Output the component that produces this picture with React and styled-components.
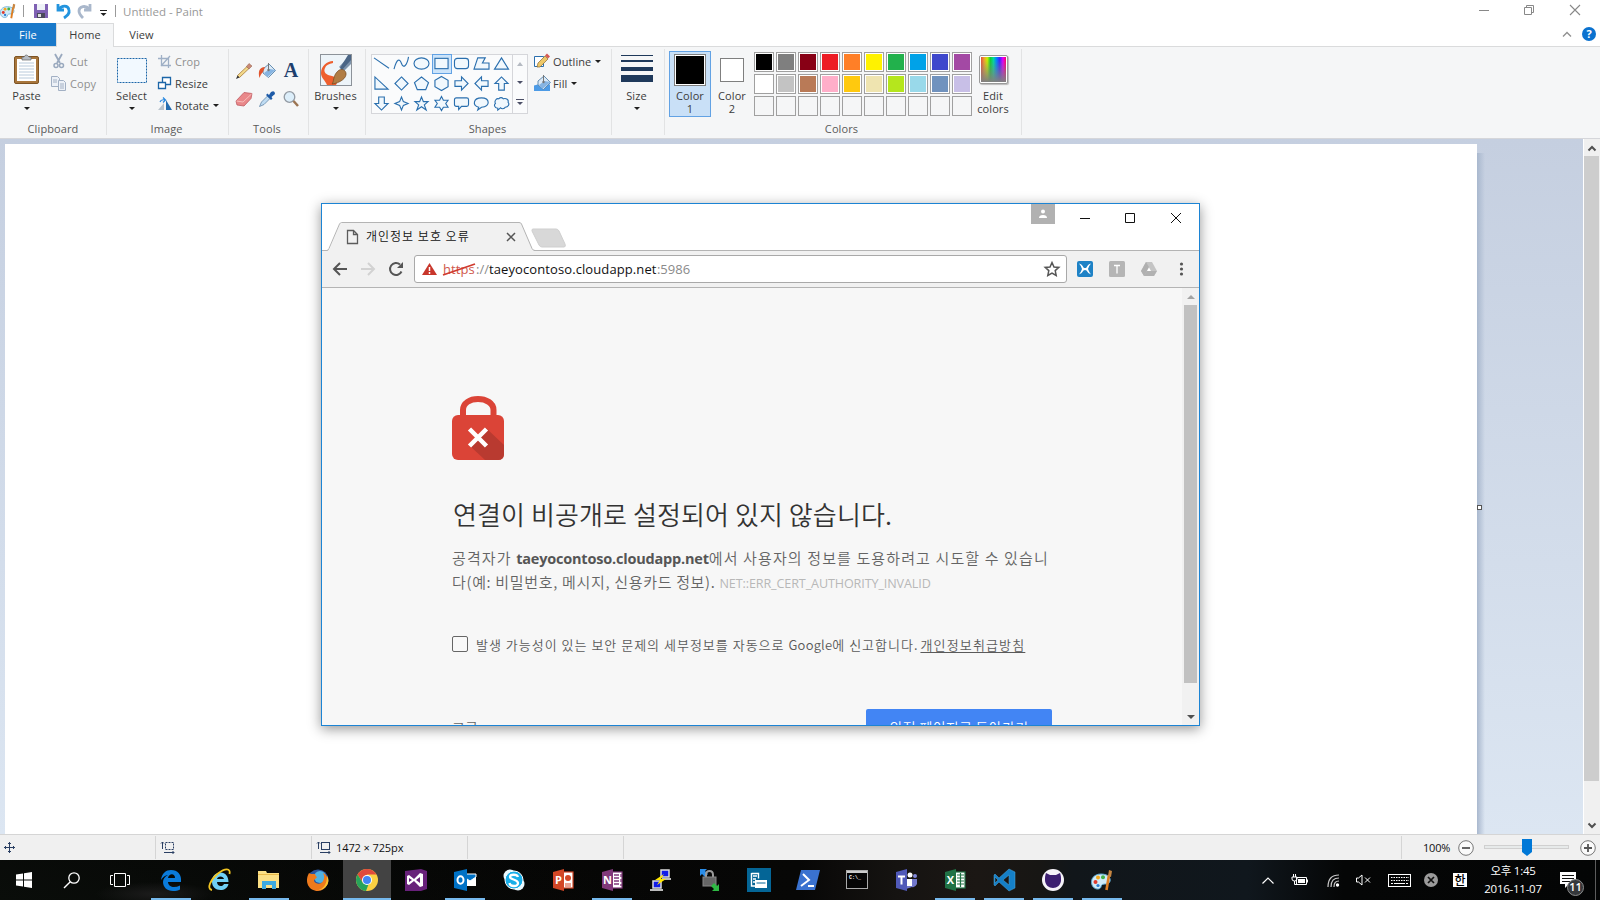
import React from 'react';
import styled, { createGlobalStyle } from 'styled-components';

const UI = '"Open Sans", "Noto Sans CJK KR", sans-serif';

const Global = createGlobalStyle`
  * { box-sizing: border-box; }
  html, body { margin: 0; padding: 0; width: 1600px; height: 900px; overflow: hidden; }
  body { font-family: ${UI}; font-size: 11px; color: #3c3c3c; background: #fff; }
  svg { display: block; flex: none; overflow: visible; }
`;

const Desktop = styled.div`
  width: 1600px; height: 900px; display: flex; flex-direction: column; overflow: hidden;
`;
const Spacer = styled.div`flex: 1;`;
const Text = styled.span`
  white-space: nowrap;
  font-size: ${p => p.$size || 11}px;
  letter-spacing: ${p => p.$ls || 0}px;
  color: ${p => p.$c || '#3c3c3c'};
  line-height: ${p => p.$lh || 14}px;
`;

/* ---------- title bar ---------- */
const TitleBar = styled.div`
  height: 23px; flex: none; display: flex; align-items: center; background: #fff;
`;
const QuickAccess = styled.div`
  display: flex; align-items: center; width: 123px; height: 23px; padding-bottom: 1px;
`;
const Caption = styled.div`
  display: flex; align-items: flex-start; gap: 35px; padding: 5px 20px 0 0; height: 23px;
`;
const TabStrip = styled.div`
  height: 24px; flex: none; display: flex; align-items: stretch; border-bottom: 1px solid #dadbdc;
`;
const RibbonTab = styled.div`
  height: ${p => (p.$active ? 24 : 23)}px;
  width: ${p => p.$w}px; display: flex; align-items: center; justify-content: center;
  font-size: 11px; letter-spacing: .1px; padding-bottom: ${p => (p.$active ? 3 : 1)}px;
  color: ${p => (p.$file ? '#fff' : '#3c3c3c')};
  background: ${p => (p.$file ? '#1979ca' : p.$active ? '#f5f6f7' : '#fff')};
  border: solid #dadbdc; border-width: ${p => (p.$active ? '1px 1px 0 1px' : '0')};
`;
const TabTools = styled.div`
  display: flex; align-items: center; gap: 11px; padding: 0 4px 1px 0;
`;

/* ---------- ribbon ---------- */
const Ribbon = styled.div`
  height: 92px; flex: none; display: flex; padding-top: 2px; background: #f5f6f7;
  border-bottom: 1px solid #d5d6da;
`;
const Group = styled.div`
  width: ${p => p.$w}px; height: 86px; display: flex; flex-direction: column; flex: none;
  border-right: 1px solid #e2e3e4;
`;
const GroupBody = styled.div`
  height: 73px; display: flex; align-items: flex-start; padding-left: ${p => p.$pl || 0}px;
`;
const GroupLabel = styled.div`
  text-align: center; line-height: 13px; font-size: 11px; letter-spacing: .1px; color: #5a5a5a;
  white-space: nowrap; padding-right: ${p => p.$pr || 0}px;
`;
const BigButton = styled.div`
  width: ${p => p.$w}px; height: 68px; display: flex; flex-direction: column; align-items: center;
  text-align: center; line-height: 13px; letter-spacing: .1px; white-space: nowrap; flex: none;
`;
const IconSlot = styled.div`
  height: 40px; padding-top: ${p => p.$pt || 5}px; flex: none;
`;
const SmallList = styled.div`
  display: flex; flex-direction: column; padding-top: 1px;
  margin-left: ${p => p.$ml || 0}px;
`;
const SmallButton = styled.div`
  height: 22px; display: flex; align-items: center; white-space: nowrap; letter-spacing: .1px;
  color: ${p => (p.$off ? '#8f8f8f' : '#3c3c3c')};
`;
const SmallIcon = styled.div`width: ${p => p.$w || 19}px; display: flex;`;
const Caret = styled.i`
  width: 0; height: 0; border: 3px solid transparent; border-bottom: 0;
  border-top-color: ${p => p.$c || '#1f1f1f'};
  margin: ${p => p.$m || 0};
`;
const ToolGrid = styled.div`
  display: grid; grid-template-columns: repeat(3, 23.5px); grid-auto-rows: 28px; padding-top: 8px;
  justify-items: center; align-items: center;
`;
const Gallery = styled.div`
  margin-top: 5px; width: 157px; height: 60px; display: flex; border: 1px solid #d5d6da; background: #fafbfc;
`;
const ShapeGrid = styled.div`
  display: grid; grid-template-columns: repeat(7, 20px); grid-auto-rows: 19.7px; width: 140.5px;
  margin: -1px 0 0 -.5px;
`;
const ShapeCell = styled.div`
  display: flex; align-items: center; justify-content: center;
  background: ${p => (p.$on ? '#cce4fa' : 'transparent')};
  outline: ${p => (p.$on ? '1px solid #62a2e4' : 'none')}; outline-offset: -1px;
`;
const GalleryScroll = styled.div`
  flex: 1; border-left: 1px solid #d5d6da; display: flex; flex-direction: column;
  align-items: center; justify-content: space-around;
`;
const ColorButton = styled(BigButton)`
  margin-top: 2px; height: 66px;
  background: ${p => (p.$on ? '#c9e0f7' : 'transparent')};
  border: 1px solid ${p => (p.$on ? '#62a2e4' : 'transparent')};
`;
const ColorSlot = styled.div`height: 37px; display: flex; align-items: center;`;
const ColorSquare = styled.div`
  width: ${p => p.$s}px; height: ${p => p.$s}px; border: 1px solid #7f7f7f; padding: 1px;
  background: ${p => p.$c}; background-clip: content-box; box-shadow: inset 0 0 0 1px #fff;
  margin-bottom: 2px;
`;
const Palette = styled.div`
  display: grid; grid-template-columns: repeat(10, 20px); grid-auto-rows: 20px; gap: 2px;
  padding-top: 3px; margin-left: 1px; flex: none;
`;
const Swatch = styled.div`
  border: 1px solid #a0a0a0; padding: 1px; background-color: ${p => p.$c || '#f5f6f7'};
  background-clip: content-box; box-shadow: inset 0 0 0 1px ${p => (p.$c ? '#fff' : '#f5f6f7')};
`;
const Spectrum = styled.div`
  width: 29px; height: 29px; border: 1px solid #999; border-radius: 2px; padding: 1px;
  box-shadow: 1px 1px 1px #bbb; background: #fff;
  &::before { content: ''; display: block; width: 25px; height: 25px;
    background: linear-gradient(to bottom, transparent 10%, #808080),
      linear-gradient(to right, #e0503c, #f0a030, #c8f000, #10d030, #00d8a0, #0080ff, #4020ff, #e000ff, #ff0060); }
`;

/* ---------- work area ---------- */
const Work = styled.div`
  height: 695px; flex: none; display: flex;
`;
const Backdrop = styled.div`
  flex: 1; display: flex; padding: 5px 0 0 5px; overflow: hidden;
  background: linear-gradient(#c5cfe0, #dce6f2);
`;
const Paper = styled.div`
  position: relative; width: 1472px; height: 690px; background: #fff;
`;
const PaperShade = styled.div`
  width: 8px; margin-top: 9px; background: linear-gradient(to right, #a9b8ce, rgba(190,203,222,0));
`;
const Handle = styled.div`
  position: absolute; left: 1472px; top: 361px; width: 5px; height: 5px; background: #fff; border: 1px solid #555;
`;
const ScrollTrack = styled.div`
  width: 17px; background: #f0f0f0; border-left: 1px solid #fff; padding: 0 1px 0 0;
  display: flex; flex-direction: column; align-items: center;
`;
const ScrollThumb = styled.div`width: 15px; height: 625px; background: #cdcdcd;`;
const ArrowBox = styled.div`height: 17px; display: flex; align-items: center; justify-content: center;`;

/* ---------- browser window ---------- */
const Browser = styled.div`
  position: absolute; left: 316px; top: 59px; width: 879px; height: 523px;
  border: 1px solid #1c84d4; background: #fff; display: flex; flex-direction: column;
  box-shadow: 0 3px 12px rgba(0,0,0,.42); overflow: hidden;
`;
const BrowserTop = styled.div`
  height: 46px; flex: none; display: flex;
`;
const TabArea = styled.div`
  width: 250px; height: 47px; position: relative; padding-top: 18px;
`;
const TabShape = styled.svg`position: absolute; left: 0; top: 0;`;
const TabContent = styled.div`
  position: relative; display: flex; align-items: center; height: 29px; padding: 0 57px 0 26px;
`;
const TabTitle = styled.span`
  font: 350 12px/20px "Noto Sans CJK KR", sans-serif; color: #111; letter-spacing: 1px; margin: -2px 0 0 8px; white-space: nowrap;
`;
const BrowserCaption = styled.div`
  display: flex; align-items: flex-start; width: 168px; height: 46px;
`;
const Avatar = styled.div`
  width: 24px; height: 20px; background: #b1b1b1; display: flex; align-items: center; justify-content: center;
`;
const NavBar = styled.div`
  height: 38px; flex: none; display: flex; align-items: center; background: #f1f1f1;
  border-top: 1px solid #b4b4b4; border-bottom: 1px solid #b4b4b4; padding-left: 10px;
`;
const NavIcons = styled.div`display: flex; gap: 12px; width: 82px;`;
const Omnibox = styled.div`
  width: 653px; height: 28px; border: 1px solid #a9a9a9; border-radius: 3px; background: #fff;
  display: flex; align-items: center; padding: 0 6px 1px 7px;
`;
const Url = styled.div`
  display: flex; margin-left: 6px; font-family: "Open Sans", sans-serif; font-size: 13px; line-height: 20px; color: #8a8a8a;
`;
const Scheme = styled.span`position: relative; color: #d0584c; width: 33px; letter-spacing: .1px;`;
const Strike = styled.svg`position: absolute; left: 0; top: 3px;`;
const Host = styled.span`color: #111; width: 168px; letter-spacing: ${p => p.$ls}px;`;
const Extensions = styled.div`
  display: flex; align-items: center; gap: 16px; margin-left: 10px;
`;
const PageRow = styled.div`flex: 1; min-height: 0; display: flex; background: #f7f7f7;`;
const Page = styled.div`
  width: 860px; padding: 108px 0 0 130px; overflow: hidden; color: #646464;
`;
const Heading = styled.h1`
  margin: 35px 0 0 1px; font: 350 26px/38px "Noto Sans CJK KR", sans-serif;
  letter-spacing: .1px; color: #333; white-space: nowrap;
`;
const Para = styled.div`
  margin-top: 13px; font: 350 15px/24px "Noto Sans CJK KR", sans-serif; color: #646464;
`;
const Line = styled.div`white-space: nowrap; height: 24px; letter-spacing: ${p => p.$ls}px;`;
const Domain = styled.b`font: 700 14.5px "Open Sans", sans-serif; color: #555; letter-spacing: ${p => p.$ls}px;`;
const ErrCode = styled.span`font: 400 12.6px "Open Sans", sans-serif; color: #b8b8b8; letter-spacing: ${p => p.$ls}px;`;
const Report = styled.div`
  display: flex; align-items: center; margin-top: 41px; height: 20px; white-space: nowrap;
  font: 350 13px/20px "Noto Sans CJK KR", sans-serif; color: #5a5a5a;
  letter-spacing: ${p => p.$ls}px;
`;
const Google = styled.span`letter-spacing: .2px; margin-left: 4px;`;
const Box = styled.div`
  width: 16px; height: 16px; border: 1px solid #666; border-radius: 2px; background: #f9f9f9; margin: -3px 8px 0 0;
`;
const Link = styled.span`text-decoration: underline; text-underline-offset: 2px; margin-left: 2px; letter-spacing: 1.15px;`;
const Actions = styled.div`
  display: flex; justify-content: space-between; width: 600px; margin-top: 54px;
  font: 350 14px/20px "Noto Sans CJK KR", sans-serif;
`;
const Advanced = styled.div`padding-top: 8px;`;
const SafeButton = styled.div`
  width: 186px; height: 37px; border-radius: 2px; background: #4285f4; color: #fff; text-align: center; padding-top: 8px;
  white-space: nowrap; letter-spacing: .3px;
`;
const PageScroll = styled.div`
  width: 17px; background: #f1f1f1; display: flex; flex-direction: column; align-items: center;
`;
const PageThumb = styled.div`width: 13px; height: 378px; background: #c1c1c1;`;

/* ---------- status bar ---------- */
const Status = styled.div`
  height: 26px; flex: none; display: flex; align-items: stretch; background: #f0f0f0; border-top: 1px solid #d5d5d5;
`;
const StatusCell = styled.div`
  width: ${p => p.$w}px; display: flex; align-items: center; padding-left: ${p => p.$pl || 5}px;
  border-right: 1px solid #d5d5d5; margin: 1px 0; gap: 5px;
`;
const Zoom = styled.div`display: flex; align-items: center; padding-left: 21px; width: 198px; padding-top: 1px;`;
const Track = styled.div`
  width: 85px; height: 4px; border: 1px solid #d0d0d0; background: #e7eaea; margin: -2px 11px 0 10px;
  display: flex; align-items: center; justify-content: center;
`;

/* ---------- taskbar ---------- */
const Taskbar = styled.div`
  height: 40px; flex: none; display: flex; align-items: stretch; color: #fff;
  background:
    radial-gradient(ellipse 60px 12px at 155px 34px, #1c1c1c, transparent),
    linear-gradient(200deg, transparent 60%, #0a0d0a 100%),
    linear-gradient(to right, #030303 0, #070706 50%, #0c0b0a 52%, #151311 56%, #1b1714 61%, #171614 65%, #11161a 67%, #10171d 78%, #050606 84%, #040505 100%);
`;
const SysCell = styled.div`width: 48px; display: flex; align-items: center; justify-content: center;`;
const Apps = styled.div`display: flex; margin-left: 2px;`;
const AppCell = styled.div`
  width: 49px; display: flex; justify-content: center;
`;
const AppFace = styled.div`
  width: ${p => (p.$active ? 48 : 40)}px; height: 40px; display: flex; align-items: center; justify-content: center;
  background: ${p => (p.$active ? '#434343' : 'transparent')};
  box-shadow: inset 0 -2px ${p => (p.$open ? '#76b9ed' : 'transparent')};
`;
const Tray = styled.div`display: flex; align-items: center;`;
const TrayCell = styled.div`width: ${p => p.$w}px; display: flex; justify-content: center;`;
const Ime = styled.div`
  width: 14px; height: 14px; background: #fff; color: #000; font: 500 12px/13px "Noto Sans CJK KR", sans-serif; text-align: center;
`;
const Clock = styled.div`
  width: 72px; text-align: center; font: 400 11.5px/18px "Open Sans", "Noto Sans CJK KR", sans-serif; letter-spacing: -.25px;
  white-space: nowrap; margin-left: -2px;
`;
const Notify = styled.div`position: relative; width: 35px; margin-left: 5px; height: 40px; padding: 12px 0 0 6px;`;
const Badge = styled.div`
  position: absolute; left: 13px; top: 19px; width: 17px; height: 17px; border-radius: 50%; background: #35383b;
  border: 1px solid #8b8b8b; font: 600 11px/14px "Open Sans", sans-serif; text-align: center;
`;
const ShowDesktop = styled.div`width: 5px; border-left: 1px solid #5c5c5c; align-self: stretch; margin-left: 6px;`;

const Svg = ({ w = 16, h = w, vb, children, ...r }) => (
  <svg width={w} height={h} viewBox={vb || `0 0 ${w} ${h}`} fill="none" {...r}>{children}</svg>
);

const PaletteIcon = ({ s = 16 }) => (
  <Svg w={s} vb="0 0 22 22">
    <path d="M10 5C3 5-1 10 1 16c2 5 8 5 9 2 0-3 3-3 6-3 5-1 5-10-6-10z" fill="#cfeaf8" stroke="#5fa9d0" />
    <circle cx="4.500" cy="13" r="2" fill="#e03a2c" /><circle cx="7" cy="8.600" r="2" fill="#f3a81d" />
    <circle cx="12" cy="8.200" r="2" fill="#42b049" /><circle cx="7" cy="16.500" r="1.600" fill="#2d7fd4" />
    <path d="M18 6l-2.500 15" stroke="#dd7d21" strokeWidth="2.600" /><path d="M17 7l1-6 3 1-1 6z" fill="#c78642" />
  </Svg>
);
const X10 = ({ c = '#888', s = 10 }) => <Svg w={s} vb="0 0 10 10"><path d="M0 0L10 10M10 0L0 10" stroke={c} strokeWidth="1.100" /></Svg>;

const blue = { stroke: '#2a6fae', strokeWidth: 1.2, fill: '#f1f8fd' };
const shapes = [
  <path d="M0 2L16 13" />,
  <path fill="none" d="M0 14C3 3 6 2 8 8s6 2 7.500-7" />,
  <ellipse cx="8" cy="8" rx="8" ry="6" />,
  <rect x="1" y="2.500" width="14" height="11" />,
  <rect x=".5" y="2.500" width="15" height="11" rx="3" />,
  <path d="M4 2h8L9 7.500h7V14H0z" />,
  <path d="M8 2l7.500 12H.5z" />,
  <path d="M1 1v13h14z" />,
  <path d="M8 1l7 7-7 7-7-7z" />,
  <path d="M8 1l7.500 6-3 7.500h-9L.5 7z" />,
  <path d="M8 .5l7 4v7l-7 4-7-4v-7z" />,
  <path d="M1 5h7V1l7 7-7 7v-4H1z" />,
  <path d="M15 5H8V1L1 8l7 7v-4h7z" />,
  <path d="M5 15V8H1l7-7 7 7h-4v7z" />,
  <path d="M5 1v7H1l7 7 7-7h-4V1z" />,
  <path d="M8 1l2 5 5 2-5 2-2 5-2-5-5-2 5-2z" />,
  <path d="M8 1l2 5h5l-4 3.500 2 5.500-5-3.500-5 3.500 2-5.500L1 6h5z" />,
  <path d="M8 .5l2 4h5l-2.500 3.500L15 12h-5l-2 3.500L6 12H1l2.500-4L1 4.500h5z" />,
  <path d="M3 2h10.500q2 0 2 2v5q0 2-2 2H8l-3 3.500V11H2.500q-2 0-2-2V4q0-2 2-2z" />,
  <path d="M5 12C-2 10-1 2 8 2s10 9 0 10l-4 3z" />,
  <path d="M4 13C0 13 0 9 1.500 8 0 5 3 2 5 3c2-2 4-1 5 0 3-1 6 1 5 3.500C17 9 15 12 12 12c-1 2-4 2-5 .5L4 15z" />,
];

const colors = [
  '#000', '#7f7f7f', '#880015', '#ed1c24', '#ff7f27', '#fff200', '#22b14c', '#00a2e8', '#3f48cc', '#a349a4',
  '#fff', '#c3c3c3', '#b97a57', '#ffaec9', '#ffc90e', '#efe4b0', '#b5e61d', '#99d9ea', '#7092be', '#c8bfe7',
  ...Array(10).fill(null),
];

const PencilIcon = () => (
  <Svg w={16}><path d="M1.500 12.500l9.500-9 2 2-9.500 9z" fill="#f3d98a" stroke="#a77b3a" strokeWidth=".8" /><path d="M10.500 3.500L13 .5l3 2.500-3 3z" fill="#c98a76" stroke="#8e5a48" strokeWidth=".5" /><path d="M0 16l1.500-3.500 2 2z" fill="#333" /></Svg>
);
const BucketIcon = ({ under }) => (
  <Svg w={16}>
    {under && <path d="M0 10.500q8-3 16-1V16H0z" fill="#4d9be6" />}
    <path d="M4 6l6-5 6.500 6.500-7 7L4 10z" fill="#dbe9f6" stroke="#5784ac" strokeWidth=".9" />
    <path d="M8.500 14l8-7-6-1-5.500 4z" fill="#86b4e2" />
    <path d="M9.500 0v6" stroke="#777" /><circle cx="9.500" cy="7" r="1.200" fill="#777" />
    {!under && <path d="M6 4C0 4-1 9 .5 15 2 11 3 10 4 9z" fill="#e2552e" />}
  </Svg>
);

const office = (color, letter, extra) => (
  <Svg w={22}>
    <rect x="9" y="3" width="12" height="16" fill="#fff" stroke={color} strokeWidth="1.200" />{extra}
    <path d="M1 3l11-3v22L1 19z" fill={color} />
    <text x="6.500" y="15" fontSize="11" fontWeight="700" fontFamily="Open Sans" fill="#fff" textAnchor="middle">{letter}</text>
  </Svg>
);

const apps = [
  { open: 1, icon: <Svg w={22}><path d="M1 11C2 4 6 1 11 1c7 0 10 5 10 9v3H8c0 3 3 5 6 5 2 0 4-.5 6-1.500v4C18 21.500 16 22 13 22 7 22 3 18 3 13c0-3 2-5.500 5-7-3 .5-5 2-7 5zM8 9h7c0-5-6-5-7 0z" fill="#0a7bdb" /></Svg> },
  { icon: <Svg w={22}><path d="M19.500 13H8c0 5 6 5 7 2h4.500c-1 4-4 6-8 6-5 0-8.500-3-8.500-8.500S6.500 3.500 11.500 3.500s8 4 8 9.500zM8 10h7c-.5-3.500-6.500-3.500-7 0z" fill="#6fd0f6" /><path d="M3 21C-3 20 2 10 9 4.500S22-1 20.500 5" stroke="#f2c522" strokeWidth="1.800" /></Svg> },
  { open: 1, icon: <Svg w={22}><path d="M0 4V2h8l1 2h12v15H0z" fill="#fbdf85" /><path d="M0 5h21v1H0z" fill="#e8b94a" /><path d="M4 20v-8h14v8h-4v-4H8v4z" fill="#3ca9e0" /></Svg> },
  { icon: <Svg w={22}><circle cx="11" cy="11" r="10.500" fill="#2b559f" /><circle cx="13" cy="8" r="6" fill="#4fb2e4" /><path d="M2 4c1 1 3 1 5 1 2 0 1 2 3 3-1 2-3 2-3 4 2 4 8 3 9 0 2-3 1-6 0-8 4 2 6 6 5 10-2 5-6 8-10 8C2 22-3 13 2 4z" fill="#ee7a1c" /><path d="M20 7c4 6-1 14-9 14 5-1 9-5 9-14z" fill="#fbc32c" /></Svg> },
  { open: 1, active: 1, icon: <Svg w={22}><circle cx="11" cy="11" r="11" fill="#fbd042" /><path d="M1.500 5.500A11 11 0 0 1 20.500 5.500H11L7 14z" fill="#e04a3c" /><path d="M1.500 5.500L7 14h6l-3 8A11 11 0 0 1 1.500 5.500z" fill="#28a35a" /><circle cx="11" cy="11" r="5" fill="#fff" /><circle cx="11" cy="11" r="4" fill="#4285f4" /></Svg> },
  { icon: <Svg w={22}><path d="M16 0l6 2v18l-6 2L0 22V2L16 0z" fill="#68217a" /><path d="M2 7l2-1 5 4 6-6 3 1v12l-3 1-6-6-5 4-2-1zM4 9v4l3-2zM15 8l-4 3 4 3z" fill="#fff" fillRule="evenodd" /></Svg> },
  { open: 1, icon: <Svg w={22}><rect x="10" y="5" width="12" height="12" fill="#fff" /><path d="M10 5h12v3l-6 4-6-4z" fill="#0072c6" stroke="#fff" /><path d="M0 3l13-3v22L0 19z" fill="#0072c6" /><ellipse cx="6.500" cy="11" rx="3" ry="3.800" stroke="#fff" strokeWidth="2" /></Svg> },
  { icon: <Svg w={22}><circle cx="7" cy="7" r="6.500" fill="#eafaff" /><circle cx="15" cy="15" r="6.500" fill="#eafaff" /><circle cx="11" cy="11" r="9" fill="#18aee8" stroke="#fff" /><path d="M15 8c-1-3-8-3-8 0s8 2 8 6-8 4-8.500 0" stroke="#fff" strokeWidth="2.300" /></Svg> },
  { icon: office('#d24726', 'P', <><circle cx="16" cy="9" r="3" fill="#d24726" /><path d="M13 15h6M13 17h6" stroke="#d24726" /></>) },
  { open: 1, icon: office('#80397b', 'N', <path d="M13 6h5M13 9h5M13 12h5M13 15h5M20 5v3M20 10v3M20 15v2" stroke="#80397b" strokeWidth="1.300" />) },
  { icon: <Svg w={22}><rect x="11" y="1" width="8" height="7" fill="#111be8" stroke="#ddd" strokeWidth="1.500" /><rect x="3" y="12" width="8" height="7" fill="#111be8" stroke="#ddd" strokeWidth="1.500" /><path d="M0 20h13v2H0zM12 9h9v2h-9z" fill="#bbb" /><path d="M14 5L5 11l5 0-3 5 9-6-5 0z" fill="#ffe600" /></Svg> },
  { icon: <Svg w={22}><path d="M1 0h7L6 2l3 3-3 3-3-3-2 2z" fill="#2a8de8" /><path d="M7 9V6q0-4 3.500-4T14 6v3" stroke="#9b9b9b" strokeWidth="2" /><rect x="4" y="8" width="13" height="9" fill="#666" stroke="#888" /><path d="M20 22h-7l2-2-3-3 3-3 3 3 2-2z" fill="#2fb944" /></Svg> },
  { icon: <Svg w={24}><rect width="24" height="24" fill="#046596" /><path d="M4.500 5.500h7v5M4.500 5v13h4M6 8h4M6 11h3M6 14h2" stroke="#fff" strokeWidth="1.400" /><path d="M8 12h12v8H8z" fill="#fff" /><path d="M9.500 15h9" stroke="#046596" /></Svg> },
  { icon: <Svg w={22}><path d="M4 1h19l-5 20H-1z" fill="#3a72d0" /><path d="M6 5l6 6-8 6M11 17h6" stroke="#fff" strokeWidth="2" /></Svg> },
  { icon: <Svg w={22}><rect x=".5" y="1.500" width="21" height="18" fill="#050505" stroke="#aaa" /><path d="M1 3h20" stroke="#ccc" strokeWidth="2" /><text x="3" y="10" fill="#fff" fontSize="5" fontFamily="Liberation Mono" fontWeight="700">C:\_</text></Svg> },
  { icon: <Svg w={22}><circle cx="15" cy="6" r="2.500" fill="#fff" /><circle cx="20" cy="7" r="2" fill="#8187d8" /><path d="M11 10h11v5q-2 4-5 3l-6 2z" fill="#7177cb" /><path d="M12 10h5v7h-5z" fill="#fff" /><path d="M1 3l11-3v22L1 19z" fill="#5059b8" /><path d="M3 7.500h7M6.500 7.500v8" stroke="#fff" strokeWidth="2" /></Svg> },
  { open: 1, icon: office('#207245', 'X', <path d="M13 6h7M13 9h7M13 12h7M13 15h7M16.500 4v14" stroke="#207245" strokeWidth="1.200" />) },
  { open: 1, icon: <Svg w={22}><path d="M16 0l6 3v16l-6 3L6 13l-4 4-1-1V6l1-1 4 4zM2 8v6l3-3zM16 6l-6 5 6 5z" fill="#1580c8" fillRule="evenodd" stroke="#4da9df" strokeWidth=".5" /></Svg> },
  { open: 1, icon: <Svg w={22}><circle cx="11" cy="11" r="11" fill="#f5f2f8" /><path d="M4 4l4 2h6l4-2c1 3 1 4 1 7 0 5-4 8-8 8s-8-3-8-8c0-3 0-4 1-7z" fill="#3c1e70" /></Svg> },
  { open: 1, icon: <PaletteIcon s={22} /> },
];

function TitleRow() {
  return (
    <TitleBar>
      <QuickAccess>
        <PaletteIcon s={16} />
        <Svg w={18} h={14}><path d="M7.500 1v12" stroke="#9a9a9a" /></Svg>
        <Svg w={14}><path d="M0 0h14v14H0z" fill="#7f61b3" /><path d="M3 0h8v6H3z" fill="#eef2f7" /><path d="M3 9h8v5H3z" fill="#4b4b5c" /><path d="M4 10h3v3H4z" fill="#ddd" /></Svg>
        <Svg w={29} h={16}><path d="M10 1v6h6M10.500 6.500C14 2 20 2 21 7c1 4-2 6-5 8" stroke="#2394de" strokeWidth="2.800" /></Svg>
        <Svg w={16} h={16}><path d="M13 1v6H7M12 6C9 2 2 3 2 8c0 3 2 5 4 7" stroke="#a9b7cb" strokeWidth="2.800" /></Svg>
        <Svg w={20} h={14}><path d="M7 6.500h7" stroke="#222" /><path d="M7.500 9h6l-3 3z" fill="#222" /><path d="M22.500 1v12" stroke="#9a9a9a" /></Svg>
      </QuickAccess>
      <Text $c="#999" $ls={0} $size={11.5}>Untitled - Paint</Text>
      <Spacer />
      <Caption>
        <Svg w={10}><path d="M-1 5.500h10" stroke="#888" /></Svg>
        <Svg w={10}><path d="M-.5 2.500h7v7h-7zM1.500 2V.5h7v7H7" stroke="#888" /></Svg>
        <X10 />
      </Caption>
    </TitleBar>
  );
}

function RibbonArea() {
  return (
    <Ribbon>
      <Group $w={107}>
        <GroupBody>
          <BigButton $w={53}>
            <IconSlot><Svg w={25} h={31}>
              <rect x=".5" y="2.500" width="24" height="27" rx="1.500" fill="#a8763c" stroke="#7e5424" /><rect x="3" y="5" width="19" height="22" fill="#fff" />
              <path d="M5 9h15M5 12h15M5 15h15M5 18h15M5 21h15M5 24h15" stroke="#b9cadb" /><path d="M8 6V3h2q2-4 5 0h2v3z" fill="#b6bcc4" stroke="#666" strokeWidth=".7" />
            </Svg></IconSlot>
            Paste<Caret $m="5px 0 0" />
          </BigButton>
          <SmallList>
            <SmallButton $off><SmallIcon $w={17}><Svg w={12} h={16}><path d="M2 1l5 9M9 1L4 10" stroke="#9aa9be" strokeWidth="1.800" /><circle cx="3" cy="12.500" r="2" stroke="#9aa9be" strokeWidth="1.500" /><circle cx="8.500" cy="12.500" r="2" stroke="#9aa9be" strokeWidth="1.500" /></Svg></SmallIcon>Cut</SmallButton>
            <SmallButton $off><SmallIcon $w={17}><Svg w={15}><path d="M-1.500 .5h6l2 2v8h-8z" fill="#edf1f7" stroke="#a2b0c4" /><path d="M5.500 4.500h5l2 2v8h-7z" fill="#edf1f7" stroke="#a2b0c4" /><path d="M0 4h4M0 6h4M7 8h4M7 10h4M7 12h4" stroke="#a2b0c4" /></Svg></SmallIcon>Copy</SmallButton>
          </SmallList>
        </GroupBody>
        <GroupLabel>Clipboard</GroupLabel>
      </Group>
      <Group $w={122}>
        <GroupBody>
          <BigButton $w={49}>
            <IconSlot $pt={9}><Svg w={30} h={25}><rect x=".5" y=".5" width="29" height="24" fill="#f2f9ff" stroke="#1c66a8" strokeDasharray="2 1" /></Svg></IconSlot>
            Select<Caret $m="5px 0 0" />
          </BigButton>
          <SmallList $ml={2}>
            <SmallButton $off><SmallIcon $w={17}><Svg w={13}><path d="M3.500 0v10.500H13M0 3.500h10.500V13M3 11l9-10" stroke="#9fb0c6" strokeWidth="1.300" /></Svg></SmallIcon>Crop</SmallButton>
            <SmallButton><SmallIcon $w={17}><Svg w={13}><path d="M4.500 .5h8v7h-8z" fill="#fff" stroke="#1c66a8" strokeWidth="1.300" /><path d="M.5 5.500h7v6h-7z" fill="#fff" stroke="#1c66a8" strokeWidth="1.300" /></Svg></SmallIcon>Resize</SmallButton>
            <SmallButton><SmallIcon $w={17}><Svg w={14}><path d="M0 12h6V5z" fill="#b9c3cc" /><path d="M8 2l6 10H8z" fill="#256db0" /><path d="M2 4q1-3 5-2M5-.5L7.500 2 5 4.500" stroke="#2888e0" strokeWidth="1.200" /></Svg></SmallIcon>Rotate<Caret $m="0 0 0 4px" /></SmallButton>
          </SmallList>
        </GroupBody>
        <GroupLabel $pr={2}>Image</GroupLabel>
      </Group>
      <Group $w={80}>
        <GroupBody $pl={3}>
          <ToolGrid>
            <PencilIcon />
            <BucketIcon />
            <Svg w={16}><text x="8" y="14" textAnchor="middle" fontFamily="Liberation Serif" fontWeight="700" fontSize="20" fill="#1e3f6e">A</text></Svg>
            <Svg w={16}><path d="M0 10l8-8.500 8 1-1 5-7 7.500-7-1z" fill="#e9888a" stroke="#bf5b62" strokeWidth=".8" /><path d="M.5 10l6.500 1 8.500-8" stroke="#f8bcba" /></Svg>
            <Svg w={16}><path d="M.5 15.500l2-4.500 6-6 2.500 2.500-6 6z" fill="#bfdcf3" stroke="#6688a8" strokeWidth=".8" /><path d="M7 4l1.500-1.500L10 4l2-3q4-2 4 2l-3.500 3 1 1.500L12 9z" fill="#1e5ba8" /></Svg>
            <Svg w={16}><circle cx="6.500" cy="6" r="5.300" fill="#dceefa" stroke="#929aa3" strokeWidth="1.300" /><path d="M10.500 10l4.500 5" stroke="#9b7452" strokeWidth="2.500" /></Svg>
          </ToolGrid>
        </GroupBody>
        <GroupLabel $pr={3}>Tools</GroupLabel>
      </Group>
      <Group $w={57}>
        <GroupBody>
          <BigButton $w={53}>
            <IconSlot><Svg w={32}>
              <rect x=".5" y=".5" width="31" height="31" fill="#edf4f9" stroke="#8c9299" />
              <path d="M13 7C7 7 1 12 1 19c0 5 4 7 6 12h9c3-4 0-8-4-9-6-1-9-4-7-8 1-3 4-4 8-5z" fill="#ee5f2e" />
              <path d="M31 1v9l-7 7-5-4L30 1z" fill="#7d93ab" /><path d="M28 1h3v5l-9 10-2-2z" fill="#4a6585" />
              <path d="M12 30c2-2 1-8 5-12 3-4 8-3 9 1 1 5-6 10-14 11z" fill="#b07d45" stroke="#74491f" strokeWidth=".7" />
            </Svg></IconSlot>
            Brushes<Caret $m="5px 0 0" />
          </BigButton>
        </GroupBody>
      </Group>
      <Group $w={246}>
        <GroupBody $pl={5}>
          <Gallery>
            <ShapeGrid>
              {shapes.map((s, i) => <ShapeCell key={i} $on={i === 3}><Svg w={15} vb="0 0 16 16" {...blue}>{s}</Svg></ShapeCell>)}
            </ShapeGrid>
            <GalleryScroll>
              <Svg w={6} h={4}><path d="M0 4h6L3 0z" fill="#b5bac2" /></Svg>
              <Caret $c="#4b4f66" />
              <Svg w={8} h={7}><path d="M0 .5h8" stroke="#4b4f66" /><path d="M1 3h6L4 6z" fill="#4b4f66" /></Svg>
            </GalleryScroll>
          </Gallery>
          <SmallList $ml={6}>
            <SmallButton><SmallIcon $w={19}><Svg w={16}><path d="M.5 3.500h9v10h-9z" stroke="#2a6fae" fill="#fff" /><path d="M3 14l1-4 7-7 3 3-8 8z" fill="#eec868" stroke="#8a6a35" strokeWidth=".7" /><path d="M11 2.500l3 3 2-2-3-3z" fill="#d65a55" /></Svg></SmallIcon>Outline<Caret $m="0 0 0 4px" /></SmallButton>
            <SmallButton><SmallIcon $w={19}><BucketIcon under /></SmallIcon>Fill<Caret $m="0 0 0 4px" /></SmallButton>
          </SmallList>
        </GroupBody>
        <GroupLabel $pr={2}>Shapes</GroupLabel>
      </Group>
      <Group $w={53}>
        <GroupBody>
          <BigButton $w={49}>
            <IconSlot><Svg w={32}><path d="M0 1h32v1H0zM0 6h32v2H0zM0 13h32v4H0zM0 21h32v7H0z" fill="#1e395b" /></Svg></IconSlot>
            Size<Caret $m="5px 0 0" />
          </BigButton>
        </GroupBody>
      </Group>
      <Group $w={357}>
        <GroupBody $pl={4}>
          <ColorButton $w={42} $on><ColorSlot><ColorSquare $s={32} $c="#000" /></ColorSlot>Color<br />1</ColorButton>
          <ColorButton $w={42}><ColorSlot><ColorSquare $s={24} $c="#fff" /></ColorSlot>Color<br />2</ColorButton>
          <Palette>{colors.map((c, i) => <Swatch key={i} $c={c} />)}</Palette>
          <BigButton $w={42}><IconSlot $pt={6}><Spectrum /></IconSlot>Edit<br />colors</BigButton>
        </GroupBody>
        <GroupLabel $pr={3}>Colors</GroupLabel>
      </Group>
    </Ribbon>
  );
}

function BrowserWindow() {
  return (
    <Browser>
      <BrowserTop>
        <TabArea>
          <TabShape width="250" height="47" viewBox="0 0 250 47" fill="none">
            <path d="M5 46.500C7 46 7 46 8 44L18 20q1-1.500 3-1.500H197q2 0 2.500 1.500L210 44q1 2.500 2 2.500V48H5z" fill="#f1f1f1" />
            <path d="M0 46.500h5q1 0 2-2L17.500 20q1-1.500 2-1.500H197q2 0 2.500 1.500L210 44.500q1 2 3 2h37" stroke="#b4b4b4" />
            <path d="M211 25h23q2 0 3 2l6 13q1 3-1 3H220q-2 0-3-2l-7-14q-.5-2 1-2z" fill="#d8d8d8" stroke="#cfcfcf" />
          </TabShape>
          <TabContent>
            <Svg w={10} h={14}><path d="M-.5.5h6l4 4v9h-10zM5.500.5v4h4" stroke="#5c5c5c" strokeWidth="1.300" /></Svg>
            <TabTitle>개인정보 보호 오류</TabTitle>
            <Spacer />
            <Svg w={8}><path d="M0 0l8 8M8 0L0 8" stroke="#555" strokeWidth="1.500" /></Svg>
          </TabContent>
        </TabArea>
        <Spacer />
        <BrowserCaption>
          <Avatar><Svg w={10} h={10}><circle cx="5" cy="2.500" r="2" fill="#fff" /><path d="M1 9q0-3 4-3t4 3z" fill="#fff" /></Svg></Avatar>
          <Svg w={144} h={30}><path d="M25 14.500h10M70.500 9.500h9v9h-9z" stroke="#111" /><path d="M116 9l10 10M126 9l-10 10" stroke="#111" /></Svg>
        </BrowserCaption>
      </BrowserTop>
      <NavBar>
        <NavIcons>
          <Svg w={16}><path d="M15 8H2M8 2L2 8l6 6" stroke="#555" strokeWidth="2" /></Svg>
          <Svg w={16}><path d="M1 8h13M8 2l6 6-6 6" stroke="#d2d2d2" strokeWidth="2" /></Svg>
          <Svg w={16}><path d="M13.500 10.500A6 6 0 1 1 12 3.500" stroke="#555" strokeWidth="2" /><path d="M15 1v6H9z" fill="#555" /></Svg>
        </NavIcons>
        <Omnibox>
          <Svg w={15} h={14}><path d="M7.500 1L15 13H0z" fill="#c8362b" /><path d="M7.500 5v4M7.500 10v2" stroke="#fff" strokeWidth="1.500" /></Svg>
          <Url>
            <Scheme>https<Strike width="33" height="14"><path d="M0 13L32 2" stroke="#d03a2e" strokeWidth="1.800" /></Strike></Scheme>
            <Text $size={13} $c="#8a8a8a" $lh={20}>://</Text><Host $ls={0.1}>taeyocontoso.cloudapp.net</Host>:5986
          </Url>
          <Spacer />
          <Svg w={16}><path d="M8 1.500l2 4.500 4.800.4-3.600 3.200 1 4.800L8 12l-4.200 2.400 1-4.800L1.200 6.400 6 6z" stroke="#555" strokeWidth="1.500" /></Svg>
        </Omnibox>
        <Extensions>
          <Svg w={16}><rect width="16" height="16" rx="2" fill="#1e82c6" /><path d="M2 2.500q3 .5 4.500 4Q8 7.500 9.500 6.500 11 3 14 2.500 12.500 4 11 8q1.500 4 3 5.500-3-1-4.500-4Q8 8.500 6.500 9.500 5 12.500 2 13.500 3.500 12 5 8 3.500 4 2 2.500z" fill="#fff" /></Svg>
          <Svg w={16}><rect width="16" height="16" rx="1.500" fill="#b5b5b5" /><path d="M5 4.500h6M8 4.500v8" stroke="#fff" strokeWidth="1.300" /></Svg>
          <Svg w={16}><path d="M5 1h6l5 9-3 5H3l-3-5z" fill="#c4c4c4" /><path d="M5 1l3 5-5 9-3-5z" fill="#b0b0b0" /><path d="M6 10h4L8 6.500z" fill="#fff" /><path d="M6 10h10l-3 5H3z" fill="#a5a5a5" opacity=".6" /></Svg>
          <Svg w={16}><circle cx="8.500" cy="3" r="1.600" fill="#555" /><circle cx="8.500" cy="8" r="1.600" fill="#555" /><circle cx="8.500" cy="13" r="1.600" fill="#555" /></Svg>
        </Extensions>
      </NavBar>
      <PageRow>
        <Page>
          <Svg w={52} h={64}>
            <path d="M11 21V14C11 7 18 3 26 3s15.500 4 15.500 11v7" stroke="#db4437" strokeWidth="6" />
            <rect y="19" width="52" height="45" rx="6" fill="#db4437" />
            <path d="M34 32l18 17v9q0 6-6 6H33L17 49z" fill="#b93a30" />
            <path d="M17.500 33l17 17M34.500 33l-17 17" stroke="#fff" strokeWidth="4.500" />
          </Svg>
          <Heading>연결이 비공개로 설정되어 있지 않습니다.</Heading>
          <Para>
            <Line $ls={1.12}>공격자가 <Domain $ls={-0.2}>taeyocontoso.cloudapp.net</Domain>에서 사용자의 정보를 도용하려고 시도할 수 있습니</Line>
            <Line $ls={0.68}>다(예: 비밀번호, 메시지, 신용카드 정보). <ErrCode $ls={-0.12}>NET::ERR_CERT_AUTHORITY_INVALID</ErrCode></Line>
          </Para>
          <Report $ls={1}><Box />발생 가능성이 있는 보안 문제의 세부정보를 자동으로 <Google>Google</Google>에 신고합니다. <Link>개인정보취급방침</Link></Report>
          <Actions><Advanced>고급</Advanced><SafeButton>안전 페이지로 돌아가기</SafeButton></Actions>
        </Page>
        <PageScroll>
          <ArrowBox><Svg w={8} h={4}><path d="M0 4h8L4 0z" fill="#a3a3a3" /></Svg></ArrowBox>
          <PageThumb />
          <Spacer />
          <ArrowBox><Svg w={8} h={4}><path d="M0 0h8L4 4z" fill="#505050" /></Svg></ArrowBox>
        </PageScroll>
      </PageRow>
    </Browser>
  );
}

const RoundButton = ({ plus }) => (
  <Svg w={16}><circle cx="8" cy="8" r="7.300" fill="#fafafa" stroke="#777" /><path d={plus ? 'M4 8h8M8 4v8' : 'M4 8h8'} stroke="#555" strokeWidth="1.800" /></Svg>
);

export default function App() {
  return (
    <Desktop>
      <Global />
      <TitleRow />
      <TabStrip>
        <RibbonTab $w={56} $file>File</RibbonTab>
        <RibbonTab $w={58} $active>Home</RibbonTab>
        <RibbonTab $w={55}>View</RibbonTab>
        <Spacer />
        <TabTools>
          <Svg w={8} h={5}><path d="M0 4.500L4 .5l4 4" stroke="#8f8f8f" strokeWidth="1.300" /></Svg>
          <Svg w={14}><circle cx="7" cy="7" r="7" fill="#0b72cf" /><text x="7" y="11" fontSize="11" fontWeight="700" fontFamily="Open Sans" textAnchor="middle" fill="#fff">?</text></Svg>
        </TabTools>
      </TabStrip>
      <RibbonArea />
      <Work>
        <Backdrop>
          <Paper><BrowserWindow /><Handle /></Paper>
          <PaperShade />
        </Backdrop>
        <ScrollTrack>
          <ArrowBox><Svg w={8} h={6}><path d="M.5 5.500L4 2l3.500 3.500" stroke="#505050" strokeWidth="2" /></Svg></ArrowBox>
          <ScrollThumb />
          <Spacer />
          <ArrowBox><Svg w={8} h={6}><path d="M.5.5L4 4 7.500.5" stroke="#505050" strokeWidth="2" /></Svg></ArrowBox>
        </ScrollTrack>
      </Work>
      <Status>
        <StatusCell $w={156} $pl={4}><Svg w={11}><path d="M5.500 0v11M0 5.500h11M4 2l1.500-1.500L7 2M4 9l1.500 1.500L7 9M2 4L.5 5.500 2 7M9 4l1.500 1.500L9 7" stroke="#2a3f63" /></Svg></StatusCell>
        <StatusCell $w={156}><Svg w={14} h={13}><path d="M1.500 8V1M0 2.500L1.500 1 3 2.500M3 11.500h10M11.500 10l1.500 1.500L11.500 13" stroke="#2a3f63" /><rect x="4.500" y="1.500" width="8" height="7" stroke="#2a3f63" strokeDasharray="2 1" /></Svg></StatusCell>
        <StatusCell $w={156}><Svg w={14} h={13}><path d="M1.500 8V1M0 2.500L1.500 1 3 2.500M3 11.500h10M11.500 10l1.500 1.500L11.500 13" stroke="#2a3f63" /><rect x="4.500" y="1.500" width="8" height="7" stroke="#2a3f63" /></Svg><Text $c="#111" $ls={-0.1}>1472 × 725px</Text></StatusCell>
        <StatusCell $w={156} />
        <StatusCell $w={778} />
        <Zoom>
          <Text $c="#111" $ls={-0.2}>100%</Text>
          <Spacer />
          <RoundButton />
          <Track><Svg w={10} h={17}><path d="M0 0h10v13l-5 4-5-4z" fill="#0078d7" /></Svg></Track>
          <RoundButton plus />
          <Svg w={4} h={1} />
        </Zoom>
      </Status>
      <Taskbar>
        <SysCell><Svg w={16}><path d="M0 2.500L7 1.500v6H0zM8 1.300L16 0v7.500H8zM0 8.500h7v6l-7-1zM8 8.500h8V16l-8-1.200z" fill="#fff" /></Svg></SysCell>
        <SysCell><Svg w={16}><circle cx="10" cy="6" r="5.200" stroke="#fff" strokeWidth="1.300" /><path d="M6.300 9.700L0 16" stroke="#fff" strokeWidth="1.400" /></Svg></SysCell>
        <SysCell><Svg w={20} h={14}><path d="M4.500.5h11v13h-11zM3 2.500H.5v9H3M17 2.500h2.500v9H17" stroke="#fff" /></Svg></SysCell>
        <Apps>
          {apps.map((a, i) => (
            <AppCell key={i}><AppFace $open={a.open} $active={a.active}>{a.icon}</AppFace></AppCell>
          ))}
        </Apps>
        <Spacer />
        <Tray>
          <TrayCell $w={28}><Svg w={12} h={7}><path d="M.5 6.500L6 1l5.500 5.500" stroke="#fff" strokeWidth="1.200" /></Svg></TrayCell>
          <TrayCell $w={36}><Svg w={16} h={12}><path d="M4.500 3.500h10v7h-10zM0 3h5v2q0 2-2.500 2T0 5zM1.500 0v3M3.500 0v3M2.500 7v3.500H5M15.500 5.500v3" stroke="#fff" /><path d="M6 5h7v4H6z" fill="#fff" /></Svg></TrayCell>
          <TrayCell $w={31}><Svg w={13}><path d="M1 13Q1 1 12 1M4 13Q4 4 12 4M7 13q0-6 5-6" stroke="#c9c9c9" strokeWidth="1.200" /><circle cx="10.500" cy="11" r="1.700" fill="#fff" /></Svg></TrayCell>
          <TrayCell $w={28}><Svg w={14} h={12}><path d="M.5 4h2L6 1v10L2.500 8h-2zM9 3.500l5 5M14 3.500l-5 5" stroke="#fff" /></Svg></TrayCell>
          <TrayCell $w={44}><Svg w={23} h={13}><rect x=".5" y=".5" width="22" height="12" stroke="#fff" /><path d="M3 3.500h18M3 6.500h18" stroke="#fff" strokeDasharray="1.500 1" /><path d="M3 9.500h2M6 9.500h11M18 9.500h2" stroke="#fff" /></Svg></TrayCell>
          <TrayCell $w={20}><Svg w={14}><circle cx="7" cy="7" r="7" fill="#9b9b9b" /><path d="M4 4l6 6M10 4l-6 6" stroke="#111" strokeWidth="1.700" /></Svg></TrayCell>
          <TrayCell $w={38}><Ime>한</Ime></TrayCell>
          <Clock>오후 1:45<br />2016-11-07</Clock>
          <Notify><Svg w={16}><path d="M0 0h16v12H9l-4 4v-4H0z" fill="#fff" /><path d="M2 3.500h12M2 6.500h12M2 9.500h8" stroke="#111" /></Svg><Badge>11</Badge></Notify>
          <ShowDesktop />
        </Tray>
      </Taskbar>
    </Desktop>
  );
}
